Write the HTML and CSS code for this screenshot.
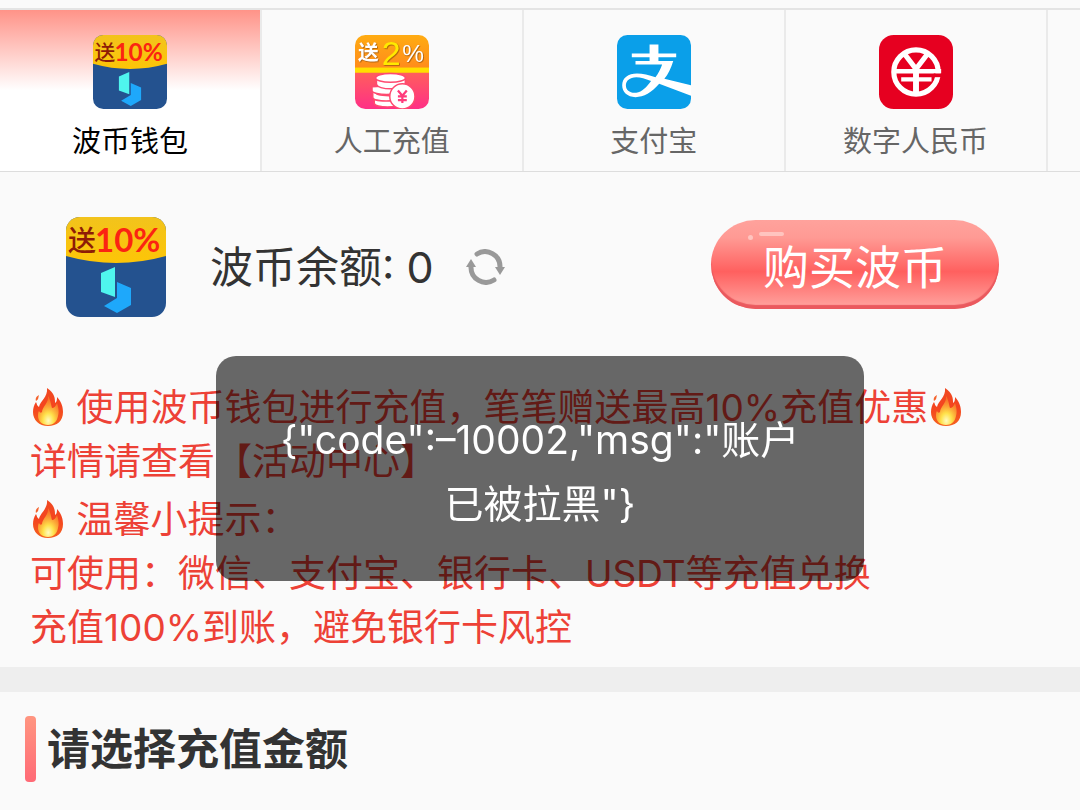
FILE: index.html
```html
<!DOCTYPE html>
<html lang="zh-CN">
<head>
  <meta charset="UTF-8" />
  <meta name="viewport" content="width=device-width, initial-scale=1.0" />
  <title>充值</title>
  <link rel="stylesheet" href="styles.css">
</head>
<body>
  <!-- shared icons -->
  <svg class="sprite" aria-hidden="true">
    <defs>
      <clipPath id="round"><rect width="100" height="100" rx="14" /></clipPath>
      <linearGradient id="gold" x2="0" y2="1">
        <stop offset="0" stop-color="#f2c31c" />
        <stop offset="1" stop-color="#fdc507" />
      </linearGradient>
      <linearGradient id="orange" x2="0" y2="1">
        <stop offset="0" stop-color="#ffac12" />
        <stop offset="1" stop-color="#ff8a1c" />
      </linearGradient>
      <linearGradient id="pink" x2="0" y2="1">
        <stop offset="0" stop-color="#ff5f5c" />
        <stop offset="1" stop-color="#ff2f86" />
      </linearGradient>
      <linearGradient id="flame" x2="0" y2="1">
        <stop offset="0" stop-color="#f04a22" />
        <stop offset="0.5" stop-color="#f4441f" />
        <stop offset="1" stop-color="#f5621f" />
      </linearGradient>
      <radialGradient id="glow" cx="0.5" cy="0.85" r="0.75">
        <stop offset="0" stop-color="#fffbc0" />
        <stop offset="0.35" stop-color="#ffe14a" />
        <stop offset="1" stop-color="#fb8c2c" stop-opacity="0.6" />
      </radialGradient>
    </defs>
    <symbol id="fire" viewBox="0 0 30 38">
      <path d="M14 0C22 5 22 11 22 15C24 14 24 11 24 9C29 14 30 20 30 24C30 33 24 38 15 38C6 38 0 32 0 24C0 20 1 17 3 14C4 16 4 18 6 19C7 13 15 9 14 0Z" fill="url(#flame)" />
      <path d="M3 13C2 10 4 8 6 7C5 10 6 11 3 13Z" fill="#f4622c" />
      <path d="M15 8C18 13 18 17 19 20C21 20 23 18 24 15C26 21 26 25 25 28C24 34 20 37 15 37C9 37 5 33 5 28C5 26 5 24 6 23C7 25 8 25 9 24C9 19 16 15 15 8Z" fill="url(#glow)" />
    </symbol>
  </svg>

  <nav class="tabs">
    <button class="tab active">
      <svg class="tab-icon" viewBox="0 0 100 100" aria-hidden="true">
        <g clip-path="url(#round)">
          <rect width="100" height="100" fill="#24528f" />
          <path d="M0 0H100V39Q50 53 0 39Z" fill="url(#gold)" />
          <text x="2" y="34" class="ico-song" fill="#8e1c06">送</text>
          <text x="29" y="35" class="ico-ten" fill="#fb2412">10%</text>
          <path d="M35 56L49 50V80L35 75Z" fill="#4ff5ee" />
          <path d="M51 65L65 71V88L51 96L38 89L51 81Z" fill="#1ea8fb" />
        </g>
      </svg>
      <span>波币钱包</span>
    </button>
    <button class="tab">
      <svg class="tab-icon" viewBox="0 0 100 100" aria-hidden="true">
        <g clip-path="url(#round)">
          <rect width="100" height="46" fill="url(#orange)" />
          <rect y="50" width="100" height="50" fill="url(#pink)" />
          <rect y="44" width="100" height="7" fill="#ffdf00" />
          <g class="ico-shade">
            <text x="4" y="34" class="ico-song bold" fill="#fff">送</text>
            <text x="36" y="40" class="ico-two" fill="#ffea00">2</text>
            <text x="64" y="37" class="ico-pct" fill="#fff">%</text>
          </g>
          <g fill="#fff" stroke="#ff4a70" stroke-width="2">
            <path d="M26 85V92C26 99 62 99 62 92V85Z" />
            <path d="M24 76V84C24 91 60 91 60 84V76Z" />
            <path d="M27 68V76C27 84 65 84 65 76V68Z" />
            <path d="M23 70V75C24 82 62 82 62 75V68Z" />
            <path d="M29 58V66C29 75 68 75 68 66V58Z" />
            <ellipse cx="48" cy="58" rx="20" ry="6" />
            <circle cx="64" cy="83" r="17" />
          </g>
          <path d="M58 75L64 82L70 75M64 82V92M58 83H70M58 88H70" fill="none" stroke="#ff3c7c" stroke-width="3" />
        </g>
      </svg>
      <span>人工充值</span>
    </button>
    <button class="tab">
      <svg class="tab-icon" viewBox="0 0 100 100" aria-hidden="true">
        <g clip-path="url(#round)">
          <rect width="100" height="100" fill="#0a9fe9" />
          <path d="M44 13H56V25H80V30H56V35H76C73 45 69 53 64 59L100 68V82L57 66C47 78 36 84 25 84C14 84 7 77 7 68C7 58 15 52 27 52C35 52 43 54 52 57C56 52 59 46 61 40H25V35H44V30H20V25H44ZM46 62C38 59 32 57 26 57C17 57 12 62 12 68C12 75 18 79 26 78C34 77 40 70 46 62Z" fill="#fff" fill-rule="evenodd" />
        </g>
      </svg>
      <span>支付宝</span>
    </button>
    <button class="tab">
      <svg class="tab-icon" viewBox="0 0 100 100" aria-hidden="true">
        <rect width="100" height="100" rx="20" fill="#e60020" />
        <g fill="none" stroke="#fff">
          <circle cx="50" cy="50" r="30" stroke-width="7" />
          <path d="M34 25L50 46L66 25" stroke-width="7" />
          <path d="M50 43V80" stroke-width="8" />
          <path d="M19 49H84M30 60H71" stroke-width="6" />
        </g>
        <path d="M74 52H86V57H74Z" fill="#e60020" />
      </svg>
      <span>数字人民币</span>
    </button>
    <div class="tab"></div>
  </nav>

  <main>
    <section class="balance">
      <svg class="balance-icon" viewBox="0 0 100 100" aria-hidden="true">
        <g clip-path="url(#round)">
          <rect width="100" height="100" fill="#24528f" />
          <path d="M0 0H100V39Q50 53 0 39Z" fill="url(#gold)" />
          <text x="2" y="34" class="ico-song" fill="#8e1c06">送</text>
          <text x="29" y="35" class="ico-ten" fill="#fb2412">10%</text>
          <path d="M35 56L49 50V80L35 75Z" fill="#4ff5ee" />
          <path d="M51 65L65 71V88L51 96L38 89L51 81Z" fill="#1ea8fb" />
        </g>
      </svg>
      <span class="balance-text">波币余额: 0</span>
      <button class="refresh" aria-label="刷新">
        <svg viewBox="0 0 40 36" aria-hidden="true">
          <g fill="none" stroke="#999" stroke-width="5" stroke-linecap="round">
            <path d="M11 5A15 15 0 0 1 34 18" />
            <path d="M28 31A15 15 0 0 1 5 18" />
          </g>
          <path d="M29 18H39L34 26ZM0 18H10L5 10Z" fill="#999" />
        </svg>
      </button>
      <button class="buy">购买波币</button>
    </section>

    <section class="notice">
      <p>
        <svg class="fire" aria-hidden="true"><use href="#fire" /></svg> 使用波币钱包进行充值，笔笔赠送最高10%充值优惠<svg class="fire" aria-hidden="true"><use href="#fire" /></svg><br>
        详情请查看【活动中心】
      </p>
      <p>
        <svg class="fire" aria-hidden="true"><use href="#fire" /></svg> 温馨小提示：<br>
        可使用：微信、支付宝、银行卡、USDT等充值兑换<br>
        充值100%到账，避免银行卡风控
      </p>
    </section>

    <section class="amount">
      <h2>请选择充值金额</h2>
    </section>
  </main>

  <div class="toast" role="alert">{"code":–10002,"msg":"账户已被拉黑"}</div>
</body>
</html>
```

FILE: styles.css
```css
* {
  box-sizing: border-box;
}

body {
  margin: 0;
  padding-top: 8px;
  background-color: #fafafa;
  color: #333;
  font-family: Inter, "Noto Sans CJK SC", sans-serif;
}

button {
  border: none;
  padding: 0;
  background: none;
  font-family: inherit;
  cursor: pointer;
}

.sprite {
  position: absolute;
  width: 0;
  height: 0;
}

/* icon lettering */
.ico-song {
  font: 500 28px "Noto Sans CJK SC", sans-serif;
}

.ico-song.bold {
  font-weight: 700;
}

.ico-ten {
  font: 700 33px Lato, sans-serif;
}

.ico-two {
  font: 46px "Liberation Sans", sans-serif;
}

.ico-pct {
  font: 33px "Liberation Sans", sans-serif;
}

.ico-shade {
  filter: drop-shadow(1px 1px 0 #a2590c);
}

/* tabs */
.tabs {
  display: flex;
  overflow: hidden;
  border-top: 2px solid #e4e4e4;
  border-bottom: 1px solid #ddd;
}

.tab {
  display: flex;
  flex: 0 0 24.25%;
  flex-direction: column;
  align-items: center;
  gap: 12px;
  height: 161px;
  padding-top: 25px;
  border-right: 2px solid #eaeaea;
  color: #666;
  font-size: 29px;
  line-height: 42px;
}

.tab.active {
  background: linear-gradient(#ff9388, #fff 50%);
  color: #000;
}

.tab-icon {
  width: 74px;
  height: 74px;
}

/* balance */
.balance {
  display: flex;
  align-items: center;
  padding: 45px 81px 0 66px;
}

.balance-icon {
  width: 100px;
  height: 100px;
  margin-right: 44px;
}

.balance-text {
  font-size: 43px;
  line-height: 60px;
}

.refresh {
  width: 40px;
  height: 36px;
  margin-left: 32px;
}

.refresh svg {
  display: block;
}

.buy {
  position: relative;
  width: 288px;
  height: 89px;
  margin-left: auto;
  margin-bottom: 6px;
  border-radius: 45px;
  background: linear-gradient(#ffa29c, #ff9a94 20%, #ff605f 58%, #ff9c98 94%);
  box-shadow: inset 0 -4px 1px #ea595e;
  color: #fff;
  font-size: 46px;
}

/* highlight on the button */
.buy::before,
.buy::after {
  content: "";
  position: absolute;
  border-radius: 3px;
  background-color: #ffc4bf;
}

.buy::before {
  top: 15px;
  left: 37px;
  width: 5px;
  height: 5px;
}

.buy::after {
  top: 12px;
  left: 48px;
  width: 25px;
  height: 4px;
}

/* notice */
.notice {
  padding: 64px 30px 8px;
  border-bottom: 25px solid #eee;
  color: #ed4136;
  font-size: 37px;
  line-height: 54px;
}

.notice p {
  margin: 0 0 4px;
}

.fire {
  width: 30px;
  height: 38px;
  margin: 0 3px;
  vertical-align: -5px;
}

/* amount */
.amount {
  padding: 24px 25px;
}

.amount h2 {
  display: flex;
  align-items: center;
  gap: 11px;
  margin: 0;
  font-size: 43px;
  line-height: 66px;
}

.amount h2::before {
  content: "";
  width: 11px;
  height: 66px;
  border-radius: 4px;
  background: linear-gradient(#ff9580, #ff6a76);
}

/* toast */
.toast {
  position: fixed;
  top: 356px;
  left: 20%;
  width: 60%;
  padding: 52px 60px 45px;
  border-radius: 20px;
  background-color: rgba(0, 0, 0, 0.59);
  color: #fff;
  font-size: 39px;
  line-height: 64px;
  text-align: center;
}
```
